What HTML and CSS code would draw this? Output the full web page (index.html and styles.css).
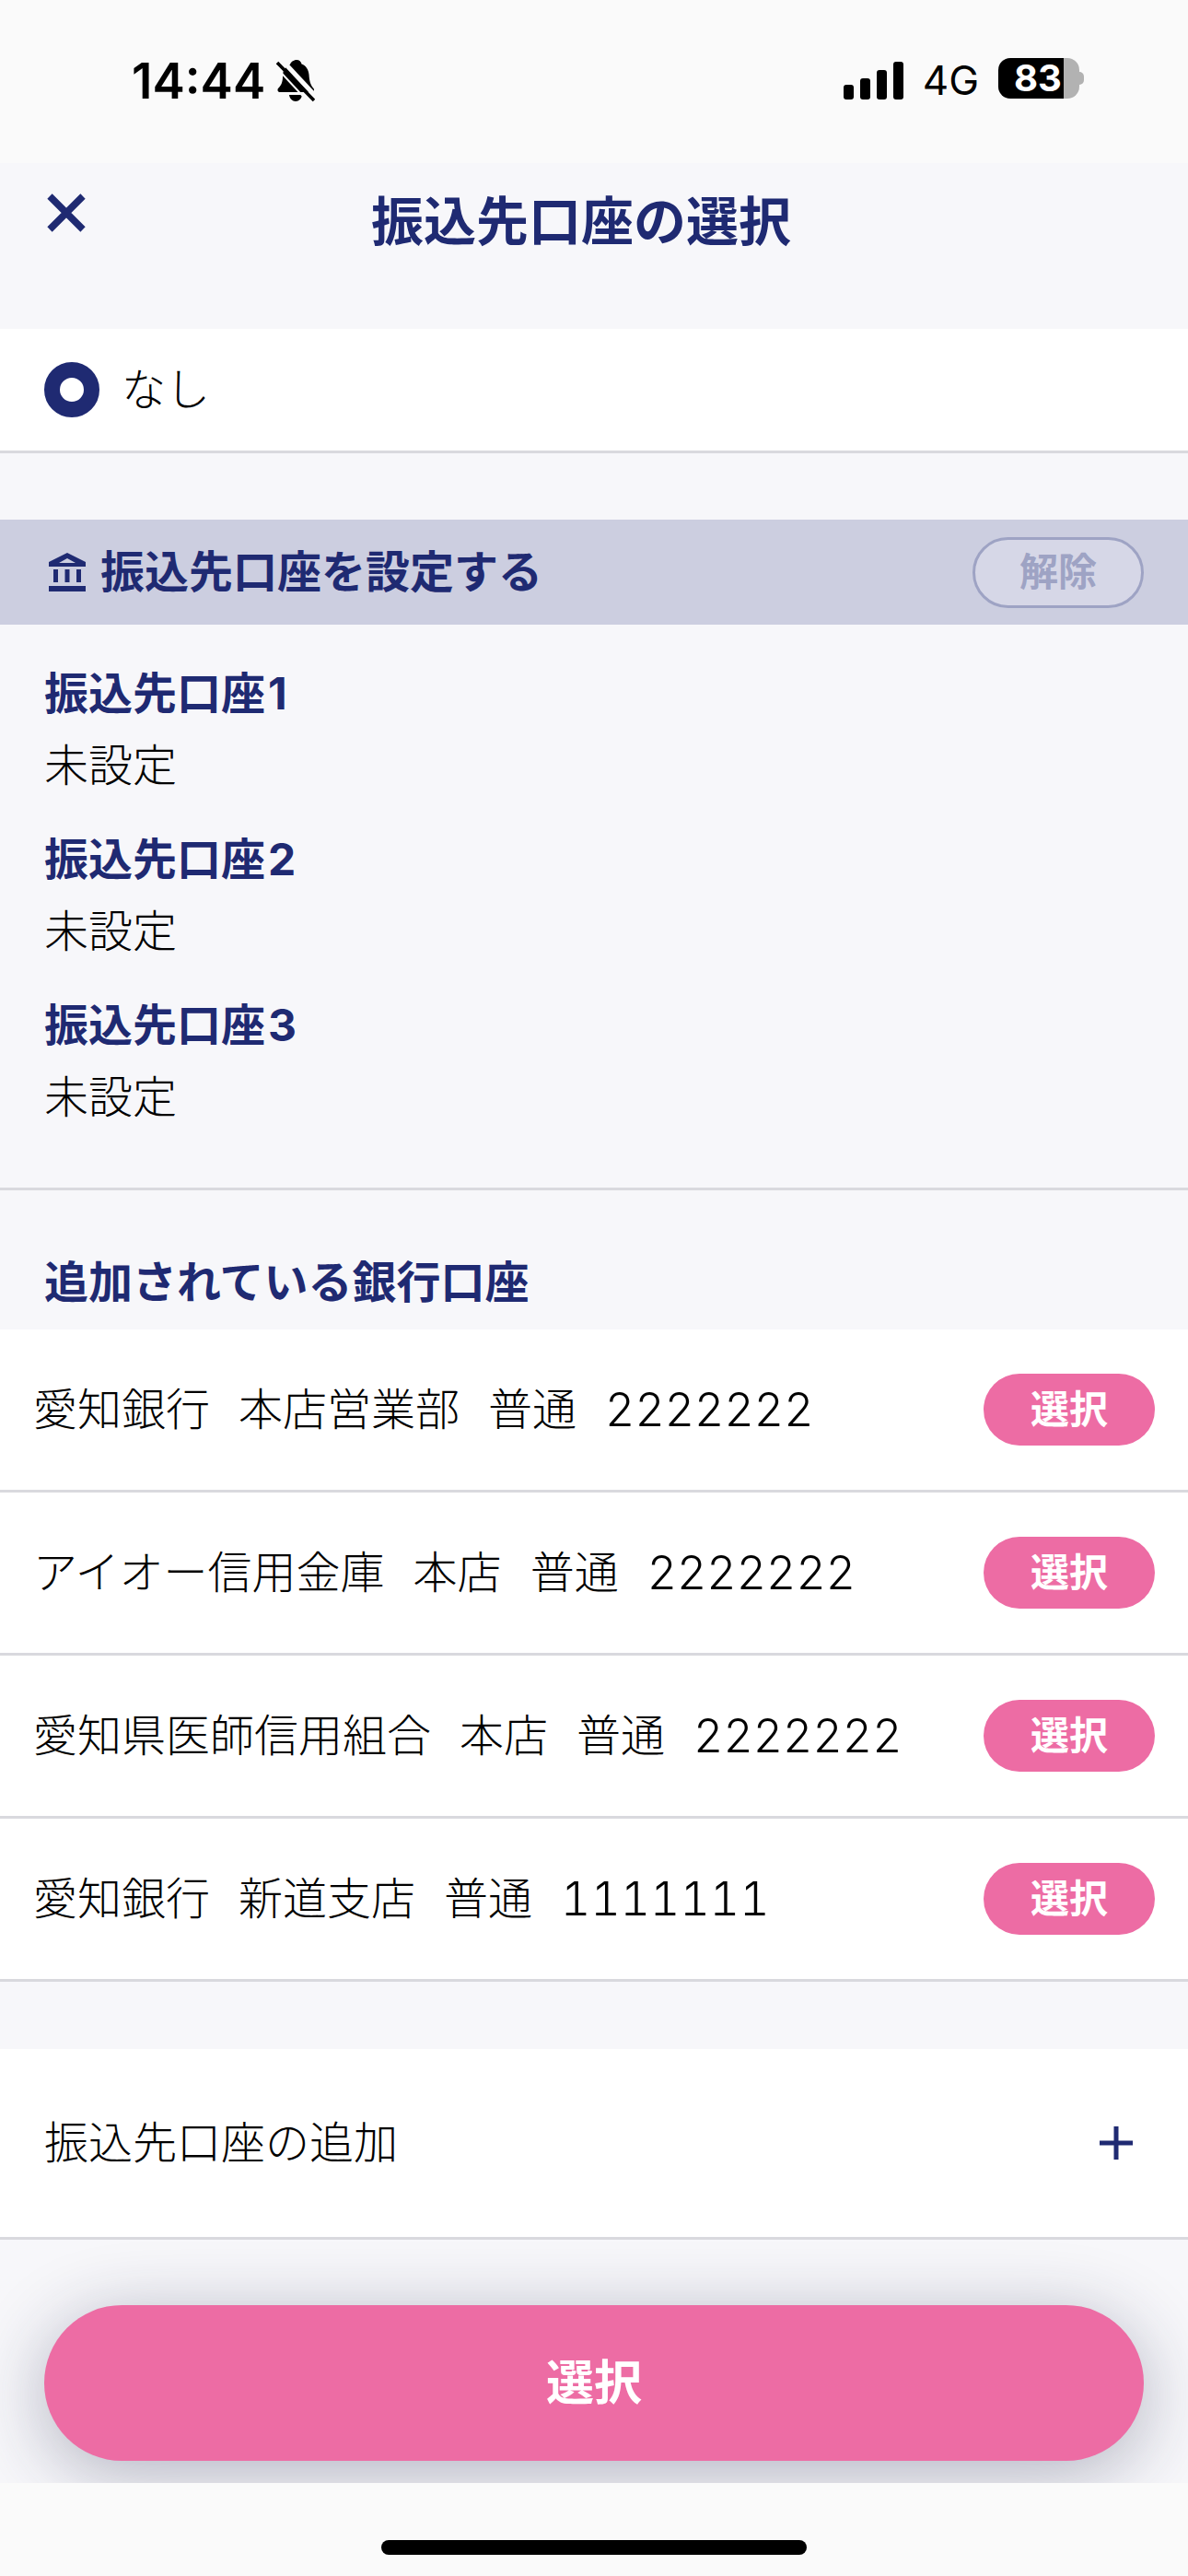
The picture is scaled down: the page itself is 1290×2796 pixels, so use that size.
FILE: index.html

```html
<!DOCTYPE html>
<html lang="ja">
<head>
  <meta charset="UTF-8" />
  <meta name="viewport" content="width=device-width, initial-scale=1.0"/>
  <title>振込先口座の選択</title>
  <link rel="stylesheet" href="styles.css">
</head>
<body>

  <div class="status-bar">
    <div class="status-left">
      <span class="time">14:44</span>
      <svg class="bell" width="42" height="46" viewBox="0 0 42 46">
        <path d="M22 0c3 0 5 2 5.500 4.500 5 2 7.500 6 8 11.500 .5 7 1.500 11 5 15 1 1.500.5 4-2 4H4c-2.500 0-3-2.500-2-4 3.500-3.500 5-7 5-13 0-7 3-11 8-13 .5-2.500 4-5 7-5z" fill="#000"/>
        <path d="M14 38h14c-.5 4-3.500 7-7 7s-6.500-3-7-7z" fill="#000"/>
        <path d="M5 -1 45 42" stroke="#fafafa" stroke-width="5"/>
        <path d="M-3 5 37 48" stroke="#fafafa" stroke-width="2"/>
        <path d="M1 3 41 44" stroke="#000" stroke-width="3.500"/>
      </svg>
    </div>
    <div class="status-right">
      <svg width="65" height="41" viewBox="0 0 65 41">
        <rect x="0" y="25" width="11" height="16" rx="3" fill="#000"/>
        <rect x="18" y="18" width="11" height="23" rx="3" fill="#000"/>
        <rect x="36" y="9" width="11" height="32" rx="3" fill="#000"/>
        <rect x="54" y="0" width="11" height="41" rx="3" fill="#000"/>
      </svg>
      <span class="network">4G</span>
      <div class="battery">
        <div class="battery-body"><span class="battery-level">83</span></div>
        <div class="battery-tip"></div>
      </div>
    </div>
  </div>

  <div class="header">
    <svg class="close" width="42" height="42" viewBox="0 0 42 42">
      <path d="M3 3 39 39M39 3 3 39" stroke="#1f2a72" stroke-width="7.500" fill="none"/>
    </svg>
    <h1>振込先口座の選択</h1>
  </div>

  <div class="none-row">
    <span class="radio"></span>
    <span>なし</span>
  </div>

  <div class="section-bar">
    <div class="section-title">
      <svg width="40" height="42" viewBox="0 0 40 42">
        <path d="M20 0 40 10V15H0V10zM20 6 11 11H29z" fill="#1f2a72" fill-rule="evenodd"/>
        <path d="M5 18h5v14H5zM17.500 18h5v14h-5zM30 18h5v14h-5zM0 36h40v6H0z" fill="#1f2a72"/>
      </svg>
      <span>振込先口座を設定する</span>
    </div>
    <div class="clear-btn">解除</div>
  </div>

  <div class="slots">
    <div class="slot">
      <div class="slot-name">振込先口座<span class="slot-num">1</span></div>
      <div class="slot-value">未設定</div>
    </div>
    <div class="slot">
      <div class="slot-name">振込先口座<span class="slot-num">2</span></div>
      <div class="slot-value">未設定</div>
    </div>
    <div class="slot">
      <div class="slot-name">振込先口座<span class="slot-num">3</span></div>
      <div class="slot-value">未設定</div>
    </div>
  </div>

  <h2 class="list-title">追加されている銀行口座</h2>

  <div class="account">
    <div class="account-text"><span>愛知銀行</span><span>本店営業部</span><span>普通</span><span class="number">2222222</span></div>
    <div class="pick-btn">選択</div>
  </div>
  <div class="account">
    <div class="account-text"><span>アイオー信用金庫</span><span>本店</span><span>普通</span><span class="number">2222222</span></div>
    <div class="pick-btn">選択</div>
  </div>
  <div class="account">
    <div class="account-text"><span>愛知県医師信用組合</span><span>本店</span><span>普通</span><span class="number">2222222</span></div>
    <div class="pick-btn">選択</div>
  </div>
  <div class="account">
    <div class="account-text"><span>愛知銀行</span><span>新道支店</span><span>普通</span><span class="number">1111111</span></div>
    <div class="pick-btn">選択</div>
  </div>

  <div class="add-row">
    <span>振込先口座の追加</span>
    <svg width="36" height="36" viewBox="0 0 36 36">
      <path d="M18 0V36M0 18H36" stroke="#1f2a72" stroke-width="5" fill="none"/>
    </svg>
  </div>

  <div class="footer">
    <div class="submit-btn">選択</div>
  </div>

  <div class="home-area">
    <div class="home-indicator"></div>
  </div>

</body>
</html>
```

FILE: styles.css

```css
* {
  box-sizing: border-box;
}

body {
  font-family: "Inter", "Noto Sans CJK JP", sans-serif;
  background-color: #f7f7fa;
  color: #000;
  font-size: 48px;
  font-weight: 300;
  line-height: 66px;
  margin: 0;
  padding: 0;
  height: 2796px;
  overflow: hidden;
}

/* status bar */
.status-bar {
  height: 177px;
  background-color: #fafafa;
  display: flex;
  justify-content: space-between;
  align-items: flex-start;
  padding: 65px 113px 0 143px;
}

.status-left {
  display: flex;
  align-items: center;
  gap: 12px;
}

.time {
  font-weight: 600;
  font-size: 53px;
  line-height: 46px;
  color: #000;
}

.status-right {
  display: flex;
  align-items: center;
  gap: 21px;
  height: 42px;
  margin-top: 1px;
}

.network {
  font-weight: 400;
  font-size: 44px;
  line-height: 42px;
  color: #000;
}

.battery {
  display: flex;
  align-items: center;
  margin-top: -4px;
}

.battery-body {
  width: 88px;
  height: 44px;
  border-radius: 13px;
  background: linear-gradient(to right, #000 81%, #b2b2b2 81%);
}

.battery-level {
  display: block;
  width: 62px;
  text-align: center;
  margin-left: 12px;
  font-weight: 700;
  font-size: 40px;
  line-height: 44px;
  color: #fff;
}

.battery-tip {
  width: 5px;
  height: 14px;
  background-color: #b2b2b2;
  border-radius: 0 7px 7px 0;
}

/* header */
.header {
  height: 180px;
  display: flex;
  align-items: flex-start;
  padding: 33px 0 0 51px;
}

.close {
  flex-shrink: 0;
}

h1 {
  margin: 0 0 0 310px;
  font-size: 57px;
  line-height: 62px;
  font-weight: 700;
  color: #1f2a72;
}

/* なし */
.none-row {
  height: 135px;
  background-color: #fff;
  border-bottom: 3px solid #d9d9de;
  display: flex;
  align-items: center;
  gap: 24px;
  padding-left: 48px;
}

.radio {
  width: 60px;
  height: 60px;
  border-radius: 50%;
  border: 17px solid #1f2a72;
  background-color: #fff;
}

/* section */
.section-bar {
  height: 114px;
  margin-top: 72px;
  background-color: #cccee0;
  display: flex;
  justify-content: space-between;
  align-items: center;
  padding: 0 48px 0 53px;
}

.section-title {
  display: flex;
  align-items: center;
  gap: 16px;
  font-weight: 700;
  color: #1f2a72;
}

.clear-btn {
  width: 186px;
  height: 77px;
  border: 3px solid #9ea3c4;
  border-radius: 39px;
  background-color: #d6d7e7;
  color: #9ea3c4;
  font-size: 42px;
  font-weight: 700;
  display: flex;
  justify-content: center;
  align-items: center;
}

.slots {
  height: 614px;
  padding: 30px 48px 0;
  border-bottom: 3px solid #d9d9de;
}

.slot {
  height: 180px;
}

.slot-name {
  font-weight: 700;
  color: #1f2a72;
  line-height: 90px;
}

.slot-num {
  margin-left: 3px;
}

.slot-value {
  line-height: 66px;
}

.list-title {
  margin: 0;
  height: 151px;
  padding: 70px 0 0 48px;
  font-size: 48px;
  line-height: 60px;
  font-weight: 700;
  color: #1f2a72;
}

/* bank accounts */
.account {
  height: 177px;
  background-color: #fff;
  border-bottom: 3px solid #d9d9de;
  display: flex;
  justify-content: space-between;
  align-items: center;
  padding: 0 36px 0 36px;
}

.account-text {
  display: flex;
  gap: 31px;
}

.number {
  font-size: 50px;
  font-feature-settings: "tnum";
}

.pick-btn {
  width: 186px;
  height: 78px;
  border-radius: 39px;
  background-color: #ed6ca4;
  color: #fff;
  font-size: 42px;
  font-weight: 700;
  display: flex;
  justify-content: center;
  align-items: center;
}

.add-row {
  height: 207px;
  margin-top: 73px;
  background-color: #fff;
  border-bottom: 3px solid #d9d9de;
  display: flex;
  justify-content: space-between;
  align-items: center;
  padding: 0 60px 0 48px;
}

/* bottom */
.footer {
  padding: 71px 48px 0;
  height: 264px;
}

.submit-btn {
  height: 169px;
  border-radius: 85px;
  background-color: #ed6ca4;
  color: #fff;
  font-size: 52px;
  font-weight: 700;
  display: flex;
  justify-content: center;
  align-items: center;
  box-shadow: 0 14px 80px rgba(30, 35, 70, 0.32);
}

.home-area {
  position: relative;
  height: 102px;
  background-color: #fafafa;
  display: flex;
  justify-content: center;
  padding-top: 62px;
}

.home-indicator {
  width: 462px;
  height: 16px;
  border-radius: 8px;
  background-color: #000;
}
```
